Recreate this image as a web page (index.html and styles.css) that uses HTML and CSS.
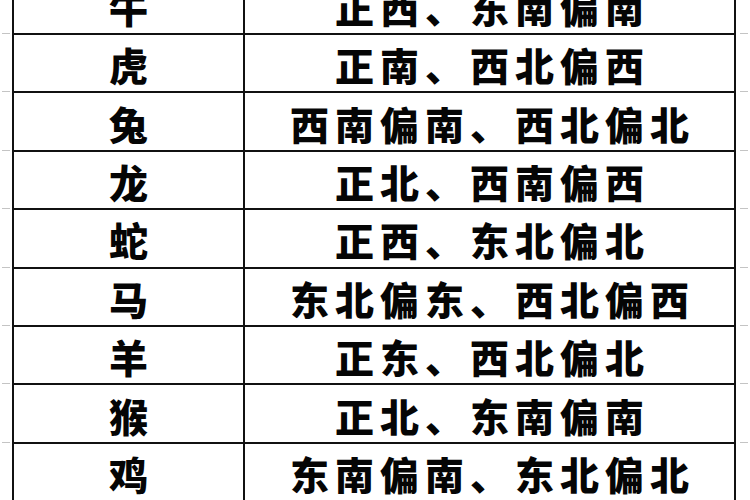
FILE: index.html
```html
<!DOCTYPE html>
<html lang="zh-CN">
<head>
<meta charset="utf-8">
<title>生肖方位</title>
<link rel="stylesheet" href="styles.css">
</head>
<body>
<div class="sheet">
  <div class="gut"><span class="tick"></span></div><div class="cell name">牛</div><div class="cell dir">正西、东南偏南</div><div class="gut r"><span class="tick"></span></div>
  <div class="gut"><span class="tick"></span></div><div class="cell name">虎</div><div class="cell dir">正南、西北偏西</div><div class="gut r"><span class="tick"></span></div>
  <div class="gut"><span class="tick"></span></div><div class="cell name">兔</div><div class="cell dir">西南偏南、西北偏北</div><div class="gut r"><span class="tick"></span></div>
  <div class="gut"><span class="tick"></span></div><div class="cell name">龙</div><div class="cell dir">正北、西南偏西</div><div class="gut r"><span class="tick"></span></div>
  <div class="gut"><span class="tick"></span></div><div class="cell name">蛇</div><div class="cell dir">正西、东北偏北</div><div class="gut r"><span class="tick"></span></div>
  <div class="gut"><span class="tick"></span></div><div class="cell name">马</div><div class="cell dir">东北偏东、西北偏西</div><div class="gut r"><span class="tick"></span></div>
  <div class="gut"><span class="tick"></span></div><div class="cell name">羊</div><div class="cell dir">正东、西北偏北</div><div class="gut r"><span class="tick"></span></div>
  <div class="gut"><span class="tick"></span></div><div class="cell name">猴</div><div class="cell dir">正北、东南偏南</div><div class="gut r"><span class="tick"></span></div>
  <div class="gut"><span class="tick"></span></div><div class="cell name">鸡</div><div class="cell dir">东南偏南、东北偏北</div><div class="gut r"><span class="tick"></span></div>
</div>
</body>
</html>
```
FILE: styles.css
```css
html, body {
  margin: 0;
  padding: 0;
  background: #fff;
  overflow: hidden;
}
.sheet {
  display: grid;
  grid-template-columns: 12px 233px 491px 14px;
  grid-auto-rows: 58.4px;
  margin-top: -23.4px;
  font-family: "Noto Sans CJK SC", sans-serif;
  font-weight: 900;
  color: #050505;
}
.cell {
  display: flex;
  align-items: center;
  justify-content: center;
  border-right: 2px solid #111;
  border-bottom: 2px solid #111;
  font-size: 39px;
  line-height: 1;
  white-space: nowrap;
  padding-top: 3px;
  box-sizing: border-box;
}
.name {
  border-left: 2px solid #111;
}
.dir {
  letter-spacing: 6px;
  padding-left: 6px;
}
.gut {
  display: flex;
  align-items: flex-end;
  padding-left: 2px;
}
.gut.r {
  padding-left: 4px;
}
.tick {
  display: block;
  width: 8px;
  height: 1px;
  margin-bottom: 1px;
  background: #c4c4c4;
}
```
